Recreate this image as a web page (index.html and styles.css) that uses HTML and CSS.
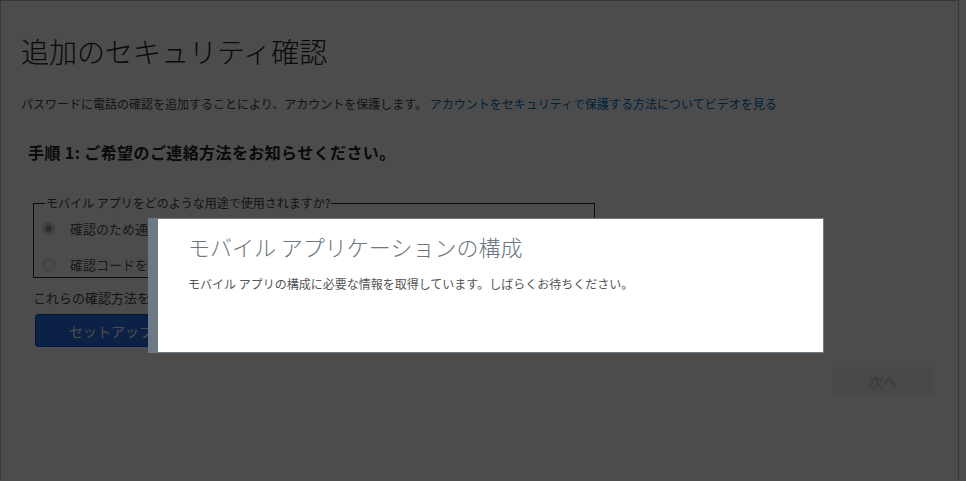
FILE: index.html
```html
<!DOCTYPE html>
<html lang="ja">
<head>
    <meta charset="UTF-8">
    <meta name="viewport" content="width=device-width, initial-scale=1.0">
    <title>追加のセキュリティ確認</title>
    <link rel="stylesheet" href="styles.css">
</head>
<body>
    <div class="page">
        <h1>追加のセキュリティ確認</h1>
        <p class="intro">パスワードに電話の確認を追加することにより、アカウントを保護します。 <a href="#">アカウントをセキュリティで保護する方法についてビデオを見る</a></p>

        <h2 class="step">手順 1: ご希望のご連絡方法をお知らせください。</h2>

        <fieldset class="methods">
            <legend>モバイル アプリをどのような用途で使用されますか?</legend>
            <label class="option"><input type="radio" name="method" checked disabled><span>確認のため通知を受け取る</span></label>
            <label class="option"><input type="radio" name="method" disabled><span>確認コードを使用する</span></label>
        </fieldset>

        <p class="note">これらの確認方法を使用するには、アプリが必要です。</p>
        <button class="setup">セットアップ</button>

        <div class="actions">
            <button class="next" disabled>次へ</button>
        </div>
    </div>

    <div class="overlay"></div>

    <div class="dialog">
        <div class="dialog-body">
            <h3>モバイル アプリケーションの構成</h3>
            <p>モバイル アプリの構成に必要な情報を取得しています。しばらくお待ちください。</p>
        </div>
    </div>
</body>
</html>
```

FILE: styles.css
```css
body {
    margin: 0;
    font-family: "Noto Sans CJK JP", "Liberation Sans", sans-serif;
    background-color: #fff;
    color: #333;
    height: 481px;
    overflow: hidden;
}

.page {
    height: 480px;
    width: 959px;
    border-top: 1px solid #bbb;
    border-left: 1px solid #bbb;
    border-right: 1px solid #bbb;
    padding: 0 20px;
    box-sizing: border-box;
}

h1 {
    font-size: 28px;
    font-weight: 300;
    line-height: 34px;
    margin: 33px 0 0 0;
    color: #222;
}

.intro {
    font-size: 12px;
    line-height: 18px;
    margin: 27px 0 0 0;
    color: #444;
}

.intro a {
    color: #0072c6;
    text-decoration: none;
}

.step {
    font-size: 16px;
    font-weight: bold;
    line-height: 22px;
    letter-spacing: 0.4px;
    margin: 28px 0 0 7px;
    color: #222;
}

.methods {
    margin: 32px 0 0 12px;
    width: 562px;
    height: 83px;
    padding: 0 0 0 8px;
    border: 1px solid #222;
    box-sizing: border-box;
}

.methods legend {
    font-size: 12px;
    line-height: 16px;
    padding: 0 1px;
    margin-left: 3px;
    color: #444;
}

.option {
    display: flex;
    align-items: center;
    gap: 15px;
    font-size: 13px;
    height: 18px;
    color: #555;
}

.option:first-of-type {
    margin-top: 8px;
}

.option + .option {
    margin-top: 18px;
}

.option input {
    appearance: none;
    margin: 0;
    width: 13px;
    height: 13px;
    border-radius: 50%;
    border: 1px solid #c8c8c8;
    background: #f3f3f3;
    box-sizing: border-box;
}

.option input:checked {
    background: radial-gradient(circle, #9a9a9a 0 3px, #e2e2e2 4px);
}

.note {
    font-size: 13px;
    line-height: 14px;
    margin: 13px 0 0 12px;
    color: #444;
    white-space: nowrap;
}

.setup {
    display: block;
    margin: 9px 0 0 14px;
    width: 152px;
    height: 33px;
    font-family: inherit;
    font-size: 14px;
    color: #fff;
    background-color: #2672ec;
    border: 1px solid #0e4eb8;
    border-radius: 3px;
}

.actions {
    display: flex;
    justify-content: flex-end;
    padding-right: 5px;
    margin-top: 20px;
}

.next {
    width: 100px;
    height: 28px;
    font-family: inherit;
    font-size: 14px;
    color: #c0c0c0;
    background-color: #f0f0f0;
    border: none;
}

.overlay {
    position: fixed;
    inset: 0;
    background-color: rgba(0, 0, 0, 0.7);
}

.dialog {
    position: absolute;
    left: 148px;
    top: 218px;
    width: 676px;
    height: 135px;
    box-sizing: border-box;
    background-color: #6e7a83;
    padding: 1px 1px 1px 10px;
}

.dialog-body {
    background-color: #fff;
    height: 100%;
    padding: 13px 30px 0 30px;
    box-sizing: border-box;
}

.dialog-body h3 {
    font-size: 22px;
    font-weight: 300;
    line-height: 28px;
    margin: 0;
    color: #6b7680;
}

.dialog-body p {
    font-size: 12px;
    line-height: 12px;
    margin: 18px 0 0 0;
    color: #555;
}
```
